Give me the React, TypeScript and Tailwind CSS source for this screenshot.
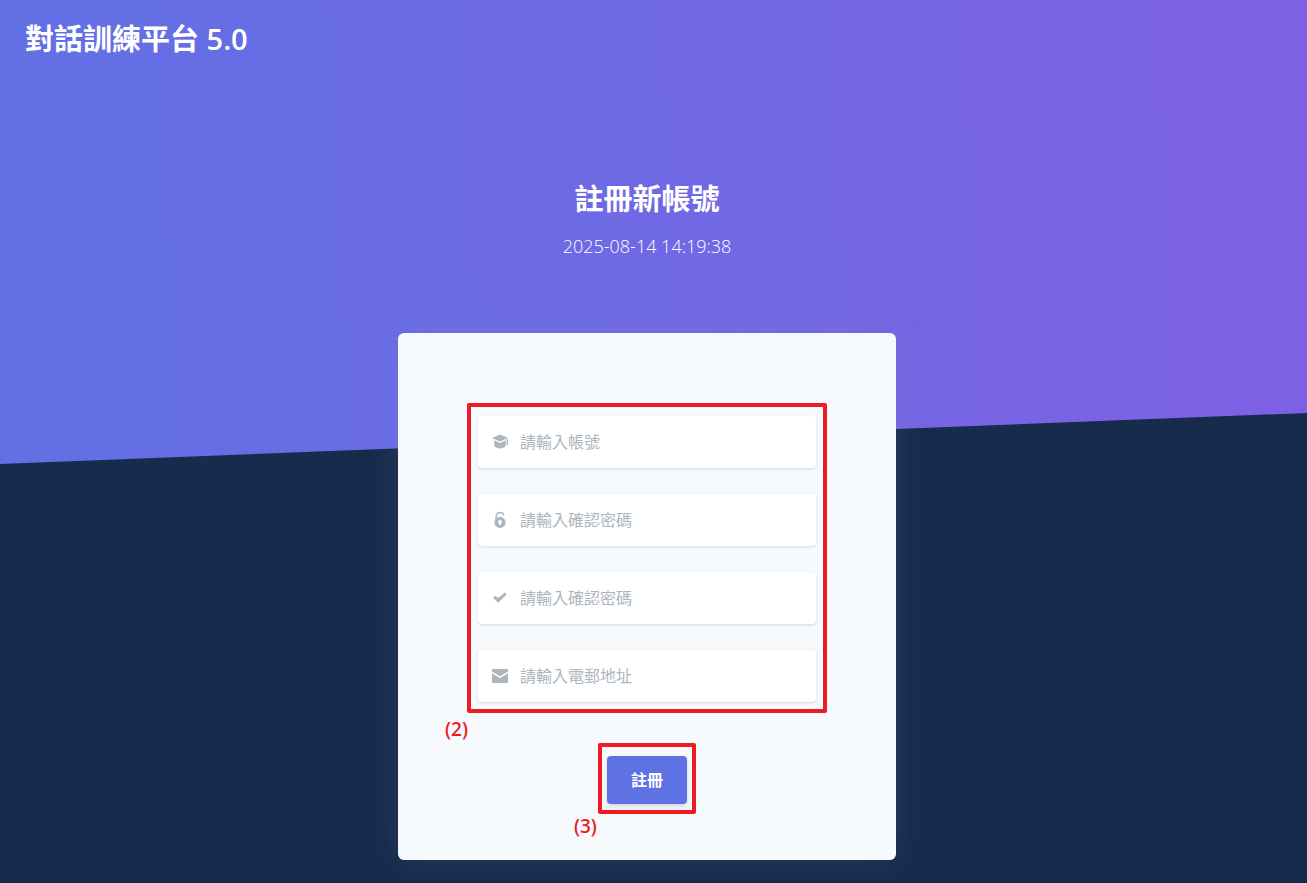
import { useState } from "react";
import type { ReactNode } from "react";

type Field = {
  id: string;
  type: string;
  placeholder: string;
  icon: ReactNode;
};

const fields: Field[] = [
  {
    id: "account",
    type: "text",
    placeholder: "請輸入帳號",
    icon: (
      <>
        <path d="M8 .4 0 4l8 3.6L16 4z" />
        <path d="M2.2 6.2v4.9c0 1.9 2.7 3.3 5.8 3.3s5.8-1.4 5.8-3.3V6.2L8 8.9z" />
        <path d="M14.6 5.2 16 4.6v6l-.7.9-.7-.9z" />
      </>
    ),
  },
  {
    id: "password",
    type: "password",
    placeholder: "請輸入確認密碼",
    icon: (
      <>
        <path
          d="M4.2 8V3.8C4.2 1.8 5.9.4 8 .4s3.6 1.4 3.6 3.2"
          fill="none"
          stroke="currentColor"
          strokeWidth="1.5"
        />
        <path
          fillRule="evenodd"
          d="M8 4.8a5.6 5.6 0 1 1 0 11.2A5.6 5.6 0 0 1 8 4.8zm0 3.2a1.9 1.9 0 0 0-1 3.5V13h2v-1.5A1.9 1.9 0 0 0 8 8z"
        />
      </>
    ),
  },
  {
    id: "confirm",
    type: "password",
    placeholder: "請輸入確認密碼",
    icon: <path d="m1 7.7 2.2-2 3 2.2 6.6-5.4 1.9 1.9-8.6 8.4z" />,
  },
  {
    id: "email",
    type: "email",
    placeholder: "請輸入電郵地址",
    icon: (
      <>
        <path d="M0 1h16v2.6L8 8.2 0 3.6z" />
        <path d="M0 5.3 8 10l8-4.7V15H0z" />
      </>
    ),
  },
];

/**
 * Red frame with a step number, drawn over the controls it points at.
 */
const Step = ({
  label,
  className,
  labelClassName,
}: {
  label: string;
  className: string;
  labelClassName: string;
}) => (
  <div
    className={`pointer-events-none absolute rounded-[2px] border-4 border-[#ed1c24] ${className}`}
  >
    <span
      className={`absolute top-full text-[19px] leading-6 font-semibold text-[#ed1c24] ${labelClassName}`}
    >
      {label}
    </span>
  </div>
);

const App = () => {
  const [values, setValues] = useState<Record<string, string>>({});

  return (
    <div className="min-h-screen overflow-hidden bg-[#172b4d] font-['Open_Sans','Noto_Sans_CJK_TC',sans-serif]">
      <header className="h-[464px] bg-[linear-gradient(87deg,#5e72e4_-10%,#825ee4_115%)] text-white [clip-path:polygon(0_0,100%_0,100%_89%,0_100%)]">
        <nav className="px-[25px] pt-[19px]">
          <a href="#" className="text-[29px] leading-10 font-bold">
            對話訓練平台 <span className="font-semibold">5.0</span>
          </a>
        </nav>
        <div className="pt-[120px] pr-[13px] text-center">
          <h1 className="text-[29px] leading-10 font-bold">註冊新帳號</h1>
          <p className="mt-[11px] text-lg leading-8 font-light">
            2025-08-14 14:19:38
          </p>
        </div>
      </header>

      <main className="relative -mt-[131px] pr-[13px] pb-6">
        <form
          onSubmit={(e) => e.preventDefault()}
          className="mx-auto w-full max-w-[498px] rounded-md bg-[#f7fafc] px-20 pt-[83px] pb-14 shadow-[0_0_32px_rgba(136,152,170,0.15)]"
        >
          <div className="relative flex flex-col gap-[26px]">
            {fields.map((field) => (
              <div
                key={field.id}
                className="flex h-[52px] items-center rounded bg-white pl-[14px] shadow-[0_1px_3px_rgba(50,50,93,0.15),0_1px_0_rgba(0,0,0,0.02)]"
              >
                <label htmlFor={field.id} aria-label={field.placeholder}>
                  <svg
                    viewBox="0 0 16 16"
                    className="size-4 overflow-visible text-[#adb5bd]"
                    fill="currentColor"
                  >
                    {field.icon}
                  </svg>
                </label>
                <input
                  id={field.id}
                  type={field.type}
                  placeholder={field.placeholder}
                  value={values[field.id] ?? ""}
                  onChange={(e) =>
                    setValues({ ...values, [field.id]: e.target.value })
                  }
                  className="h-full min-w-0 flex-1 bg-transparent px-3 text-base text-[#8898aa] outline-none placeholder:text-[#adb5bd]"
                />
              </div>
            ))}
            <Step
              label="(2)"
              className="-inset-x-[11px] -top-[13px] -bottom-[11px]"
              labelClassName="-left-[26px] mt-2"
            />
          </div>

          <div className="mt-[54px] flex justify-center">
            <div className="relative">
              <button
                type="submit"
                className="h-12 cursor-pointer rounded bg-[#5e72e4] px-6 text-base font-bold text-white shadow-[0_4px_6px_rgba(50,50,93,0.11),0_1px_3px_rgba(0,0,0,0.08)]"
              >
                註冊
              </button>
              <Step
                label="(3)"
                className="-inset-x-[9px] -top-[13px] -bottom-[10px]"
                labelClassName="-left-7 mt-1"
              />
            </div>
          </div>
        </form>
      </main>
    </div>
  );
};

export default App;
